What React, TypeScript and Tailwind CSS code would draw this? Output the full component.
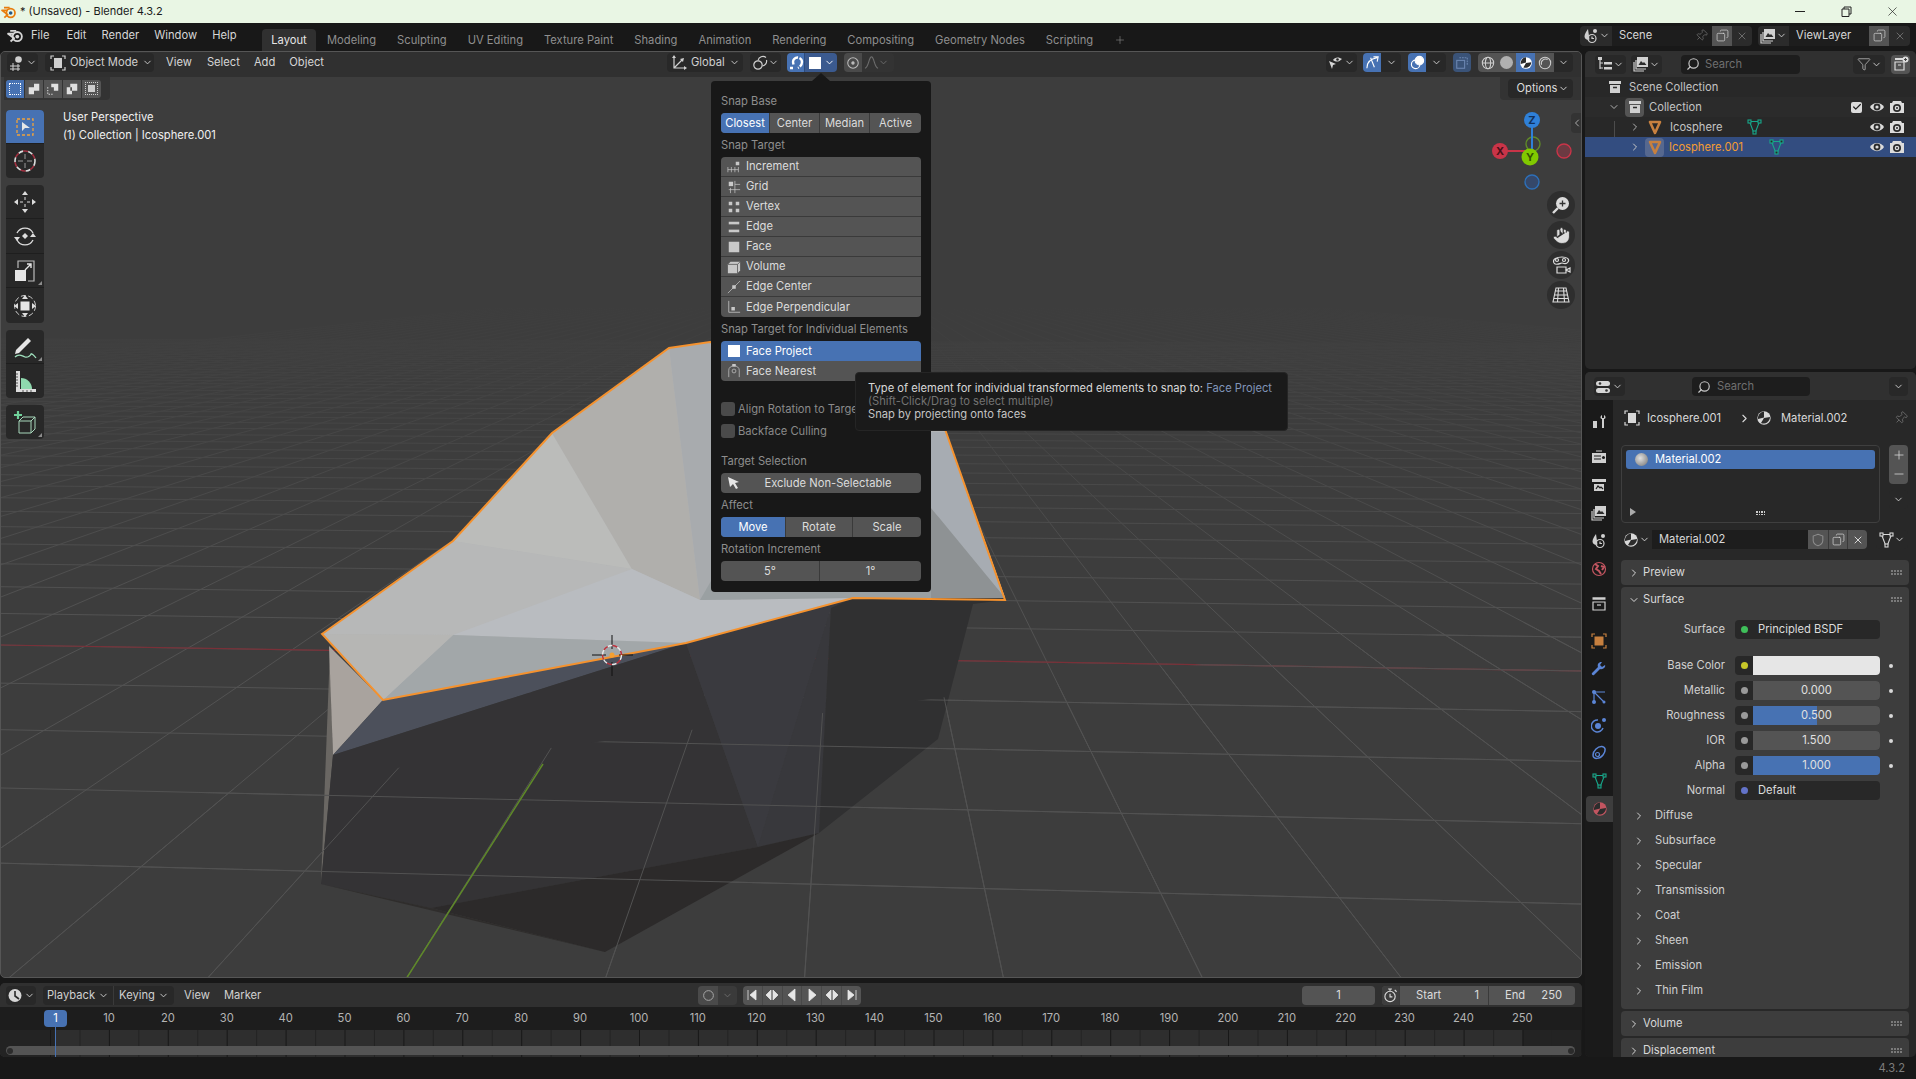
import type { ReactNode } from 'react';
import { ChevronDown, ChevronRight, ChevronLeft, Copy, Funnel, Hand, Pin, Search, X, Check, Plus, Minus } from 'lucide-react';

const I = ({ s = 16, v = 16, children, className = '' }: { s?: number; v?: number; children: ReactNode; className?: string }) => (
  <svg width={s} height={s} viewBox={`0 0 ${v} ${v}`} fill="none" stroke="currentColor" strokeWidth={1.2} className={`shrink-0 ${className}`}>
    {children}
  </svg>
);

const Chev = ({ className = '' }: { className?: string }) => <ChevronDown size={11} strokeWidth={2} className={`shrink-0 ${className}`} />;

// ---- small header icons
const ViewportIc = () => (
  <I><path d="M1 11h10M1 14h10M4 8v8M9 9v7" strokeWidth={1} /><circle cx="9.500" cy="4.500" r="3.300" fill="currentColor" stroke="none" /></I>
);
const ModeIc = () => (
  <I><path d="M1 4V1h3M12 1h3v3M15 12v3h-3M4 15H1v-3" /><rect x="4" y="3" width="8" height="10" fill="currentColor" stroke="none" /></I>
);
const GlobalIc = () => (
  <I><path d="M3 3v10h11M3 13l8-8" /><path d="M3 0l2 3H1zM16 13l-3 2v-4zM13 3l-1 4-3-3z" fill="currentColor" stroke="none" /></I>
);
const PivotIc = () => (
  <I><circle cx="6" cy="10" r="4.200" /><path d="M6 5.500a5 5 0 0 1 8-3M14.500 5a5 5 0 0 1-4 6" /></I>
);
const MagnetIc = () => (
  <I><path d="M5 13h-3M5.500 9.500 5 7a4.500 4.500 0 0 1 9 0c0 3-2 5-4 6" strokeWidth={2.400} strokeDasharray="10 1.500" /></I>
);
const CollectionIc = ({ s = 16 }: { s?: number }) => (
  <I s={s}><path d="M2 2h12v3H2z" fill="currentColor" stroke="none" /><path d="M3 6h10v8H3z" fill="currentColor" stroke="none" /><path d="M6 8.500h4" stroke="#2b2b2b" strokeWidth={1.400} /></I>
);
const TriIc = () => (
  <I><path d="M3 3h10l-5 11z" stroke="#c7803f" strokeWidth={2.600} strokeLinejoin="round" /></I>
);
const MeshIc = ({ color = '#17a88b' }: { color?: string }) => (
  <svg width="15" height="16" viewBox="0 0 15 16" fill="none" stroke={color} strokeWidth={1.100} className="shrink-0">
    <path d="M2.500 2.500h10L8.500 13h-2z" />
    <rect x="1" y="1" width="3" height="3" fill="#282828" />
    <rect x="11" y="1" width="3" height="3" fill="#282828" />
    <rect x="6" y="12" width="3" height="3" fill="#282828" />
  </svg>
);
const SceneIc = () => (
  <I><path d="M5 1C3 4 1.500 6 1.500 8.500a3.500 3.500 0 0 0 5 3" fill="currentColor" stroke="none" /><circle cx="12" cy="3" r="2" fill="currentColor" stroke="none" /><circle cx="9" cy="10.500" r="4" /><path d="M9 8.500v2h2" /></I>
);
const LayerIc = () => (
  <I><rect x="4" y="1" width="11" height="10" fill="currentColor" stroke="none" /><path d="M3 4v9h10M1 6v9h10" /><path d="M5.500 9l2.500-4 2 2 1-1 2.500 3z" fill="#2b2b2b" stroke="none" /></I>
);
const NewCollIc = () => (
  <I><path d="M2 6h9v8H2zM5 9h3" /><path d="M2 3h8" strokeWidth={2} /><circle cx="12.500" cy="3.500" r="3" fill="currentColor" stroke="none" /><path d="M12.500 2v3M11 3.500h3" stroke="#444" strokeWidth={1} /></I>
);
const OutlinerIc = () => (
  <I><path d="M3 3v10M3 7h3M3 12h3" /><path d="M1 1h4v3H1zM7 6h8v2.500H7zM7 11h8v2.500H7z" fill="currentColor" stroke="none" /></I>
);
const MatIc = ({ s = 16 }: { s?: number }) => (
  <I s={s}>
    <circle cx="8" cy="8" r="6.700" fill="currentColor" stroke="none" />
    <path d="M8 1.500v6l-6 1.500A6.500 6.500 0 0 1 8 1.500zM8 8l6-1a6.500 6.500 0 0 1-9 6z" fill="#2c2c2c" stroke="none" />
  </I>
);
const EyeIc = () => (
  <svg width="16" height="16" viewBox="0 0 16 16" className="shrink-0">
    <path d="M1 8c3-5.500 11-5.500 14 0-3 5.500-11 5.500-14 0z" fill="#dcdcdc" />
    <circle cx="8" cy="8" r="3.400" fill="#2b2b2b" />
    <circle cx="8" cy="8" r="1.600" fill="#dcdcdc" />
  </svg>
);
const RenderCamIc = () => (
  <svg width="16" height="16" viewBox="0 0 16 16" className="shrink-0">
    <path d="M4 2h8l1 2h2v10H1V4h2z" fill="#dcdcdc" />
    <circle cx="8" cy="9" r="4" fill="#2b2b2b" />
    <circle cx="8" cy="9" r="2.300" fill="#dcdcdc" />
    <circle cx="8" cy="9" r="1" fill="#2b2b2b" />
  </svg>
);
const GripDots = () => (
  <div className="grid grid-cols-4 gap-x-[1px] gap-y-[1px]">
    {Array.from({ length: 8 }, (_, i) => <span key={i} className="w-[2px] h-[2px] bg-[#7a7a7a]" />)}
  </div>
);

const BlenderLogo = ({ s = 18, body = 'currentColor', dot = 'currentColor' }: { s?: number; body?: string; dot?: string }) => (
  <svg width={s} height={s} viewBox="0 0 24 24" fill="none" stroke={body} strokeWidth={2.600} strokeLinejoin="round" className="shrink-0">
    <circle cx="14.500" cy="13.500" r="6.500" />
    <path d="M13 5.500H4.500M10 9.500H1.500L10 16l-5 4.500" />
    <circle cx="14.500" cy="13.500" r="2.700" fill={dot} stroke="none" />
  </svg>
);

// ---- tool shelf icons
const tools: Record<string, ReactNode> = {
  select: (
    <><rect x="4" y="4" width="16" height="16" stroke="#f0a23c" strokeWidth={1.300} strokeDasharray="3 2" /><path d="M9 7l8 6h-5l-3 3z" fill="#e6e6e6" stroke="none" /></>
  ),
  cursor: (
    <><circle cx="12" cy="12" r="10" stroke="#ddd" strokeWidth={1.600} strokeDasharray="5 5" /><circle cx="12" cy="12" r="10" stroke="#a03040" strokeWidth={1.600} strokeDasharray="5 5" strokeDashoffset={5} /><path d="M12 5v5M12 14v5M5 12h5M14 12h5" stroke="#999" /></>
  ),
  move: (
    <><path d="M12 1l3 4H9zM12 23l-3-4h6zM1 12l4-3v6zM23 12l-4 3V9z" fill="#ddd" stroke="none" /><path d="M12 7v3M12 14v3M7 12h3M14 12h3" stroke="#ddd" /></>
  ),
  rotate: (
    <><path d="M4 9a9 9 0 0 1 16 0M20 16a9 9 0 0 1-16 0" stroke="#ddd" strokeWidth={1.300} /><path d="M12 9l3 3-3 3-3-3z" fill="#ddd" stroke="none" /><path d="M1 13h6l-3 4zM17 13h6l-3-4z" fill="#ddd" stroke="none" /></>
  ),
  scale: (
    <><rect x="2" y="11" width="11" height="11" fill="#e6e6e6" stroke="none" /><path d="M5 9V2h16v20h-6" stroke="#bbb" strokeWidth={1.200} /><path d="M12 11l6-6M14 5h4v4" stroke="#e6e6e6" strokeWidth={1.400} /></>
  ),
  transform: (
    <><circle cx="12" cy="12" r="10.500" stroke="#ccc" strokeDasharray="5 2.500" /><rect x="7.500" y="7.500" width="9" height="9" fill="#e6e6e6" stroke="none" /><path d="M12 1l3 4H9zM12 23l-3-4h6zM1 12l4-3v6zM23 12l-4 3V9z" fill="#ddd" stroke="none" /></>
  ),
  annotate: (
    <><path d="M3 15L15 3l3 3L6 18l-4 1z" fill="#e6e6e6" stroke="none" /><path d="M2 22c4-4 7-1 10 0s6-2 6-3 3 1 5 4" stroke="#9fe0bd" strokeWidth={1.300} /></>
  ),
  measure: (
    <><path d="M3 2h4v18h16v3H3z" fill="#ddd" stroke="none" /><path d="M8 9a11 11 0 0 1 11 11H8z" fill="#8fd9ae" stroke="none" /><path d="M3 5h2M3 8h2M3 11h2M3 14h2M3 17h2M10 21v2M14 21v2M18 21v2" stroke="#333" strokeWidth={0.800} /></>
  ),
  add: (
    <><path d="M5 1v8M1 5h8" stroke="#6fd19a" strokeWidth={2.200} /><path d="M6 11l4-4h12v12l-4 4H6zM6 11h12v12M18 11l4-4" stroke="#a7d7bb" strokeWidth={1} /></>
  ),
};
const Tool = ({ name, active, corner, tall }: { name: string; active?: boolean; corner?: boolean; tall?: boolean }) => (
  <div className={`relative w-[38px] ${tall ? 'h-[35px]' : 'h-[34px]'} flex items-center justify-center ${active ? 'bg-[#4772b3]' : ''}`}>
    <svg width="24" height="24" viewBox="0 0 24 24" fill="none">{tools[name]}</svg>
    {corner && <span className="absolute right-[2px] bottom-[2px] w-[4px] h-[4px] bg-[#8c8c8c] [clip-path:polygon(100%_0,100%_100%,0_100%)]" />}
  </div>
);
const ToolGroup = ({ children }: { children: ReactNode }) => (
  <div className="w-[38px] rounded-[4px] bg-[#282828] overflow-hidden flex flex-col divide-y divide-[#1e1e1e]">{children}</div>
);

const NavBtn = ({ children }: { children: ReactNode }) => (
  <div className="w-[28px] h-[28px] rounded-full bg-[#2e2e2e] flex items-center justify-center text-[#dcdcdc]">{children}</div>
);

// ---- viewport drawing
const VPX = 852;
const HY = 267;
const vertical = Array.from({ length: 75 }, (_, i) => 410 + 197 * (i - 30));
const horizontal = Array.from({ length: 52 }, (_, i) => 1 / (0.00262 - 0.00024 * (i - 47)));

const GridLines = ({ stroke }: { stroke: string }) => (
  <g stroke={stroke} strokeWidth={1}>
    {vertical.map((x970) => (
      <line key={x970} x1={VPX + (x970 - VPX) * (40 / 703)} y1={307} x2={VPX + (x970 - VPX) * (740 / 703)} y2={1007} />
    ))}
    {horizontal.map((d) => (
      <line key={d} x1={-10} y1={HY + (d * 22990) / 23280} x2={1600} y2={HY + (d * 24600) / 23280} />
    ))}
  </g>
);

const faces: [string, string][] = [
  ['321,633 452,540 551,432 668,347 709,341 925,372 945,431 1004,597 852,597 685,642 382,699', '#b2b4b5'],
  ['321,633 452,540 631,568 699,599 452,634', '#b7b8b8'],
  ['452,540 551,432 631,568', '#bbbcba'],
  ['551,432 668,347 699,599 631,568', '#b0afac'],
  ['668,347 709,341 740,600 699,599', '#a8abae'],
  ['452,634 631,568 699,599 852,597 685,642', '#b9bcc0'],
  ['452,634 685,642 382,699', '#a2a7a9'],
  ['321,633 452,634 382,699', '#b6b6b4'],
  ['699,599 710,580 930,580 945,431 1004,597 852,597', '#9aa0a2'],
  ['930,431 945,431 1004,597 930,507', '#a7acb2'],
  ['930,507 1004,597 930,597', '#8e9294'],
  ['329,648 332,754 320,883', '#6a6763'],
  ['328,645 382,699 332,754', '#a9a39e'],
  ['382,699 685,642 332,754', '#4c505b'],
  ['332,754 685,642 757,846 430,907 320,883', '#343335'],
  ['685,642 852,597 830,607 757,846', '#3a3a3f'],
  ['830,607 818,832 757,846', '#38383c'],
  ['830,607 852,597 1004,599 972,603 937,738 818,832', '#303031'],
  ['430,907 757,846 818,832 604,951', '#2c2a2a'],
  ['320,883 430,907 604,951', '#2f2d2c'],
];

const Scene3D = () => (
  <svg className="absolute left-0 top-0" width="1582" height="927" viewBox="0 51 1582 927">
    <defs>
      <linearGradient id="gridfade" gradientUnits="userSpaceOnUse" x1="0" y1="300" x2="0" y2="620">
        <stop offset="0" stopColor="#3d3d3d" />
        <stop offset="1" stopColor="#525252" />
      </linearGradient>
      <clipPath id="below">
        <polygon points="0,818 1582,614 1582,978 0,978" />
      </clipPath>
    </defs>
    <GridLines stroke="url(#gridfade)" />
    <path d="M0 644L1582 670" stroke="#7a3038" strokeWidth={1.200} />
    {faces.map(([points, fill]) => <polygon key={points} points={points} fill={fill} />)}
    <g clipPath="url(#below)">
      <GridLines stroke="#525252" />
      <path d="M542 763L405 978" stroke="#5f8a28" strokeWidth={1.500} />
    </g>
    <polygon
      points="321,633 452,540 551,432 668,347 709,341 925,372 945,431 1004,599 852,597 685,642 382,699"
      fill="none" stroke="#f5922e" strokeWidth={2}
    />
    <g>
      <path d="M611 634v14M611 661v14M591 654h14M618 654h14" stroke="#101010" strokeWidth={1} />
      <circle cx="611" cy="654" r="9.500" fill="none" stroke="#e8e8e8" strokeWidth={1.400} strokeDasharray="5 5" />
      <circle cx="611" cy="654" r="9.500" fill="none" stroke="#c0303c" strokeWidth={1.400} strokeDasharray="5 5" strokeDashoffset={5} />
      <circle cx="611" cy="654" r="2.500" fill="#f5a030" />
    </g>
  </svg>
);

const Gizmo = () => (
  <svg className="absolute left-[1489px] top-[54px]" width="90" height="100" viewBox="1490 106 90 100" fontFamily="Inter, sans-serif" fontSize="11" fontWeight="700" textAnchor="middle">
    <circle cx="1564" cy="151" r="7" fill="#6c3a42" stroke="#c93448" strokeWidth={1.400} />
    <circle cx="1532" cy="182" r="7" fill="#35486a" stroke="#2d6fb8" strokeWidth={1.400} />
    <circle cx="1533" cy="144" r="7" fill="none" stroke="#5f8a28" strokeWidth={1.400} />
    <path d="M1532 126V156" stroke="#2f80d8" strokeWidth={2} />
    <path d="M1506 151H1528" stroke="#c93448" strokeWidth={2} />
    <circle cx="1532" cy="120" r="8" fill="#2f80d8" />
    <text x="1532" y="124" fill="#12305a">Z</text>
    <circle cx="1500" cy="151" r="8" fill="#c93448" />
    <text x="1500" y="155" fill="#4a1018">X</text>
    <circle cx="1530" cy="157" r="8.500" fill="#81c900" />
    <text x="1530" y="161" fill="#355400">Y</text>
  </svg>
);

// ---- widgets
const Dim = ({ className = '', children }: { className?: string; children?: ReactNode }) => (
  <div className={`h-[19px] flex items-center justify-center rounded-[4px] bg-[#282828] text-[#d0d0d0] ${className}`}>{children}</div>
);

const PopLabel = ({ children, className = '' }: { children: ReactNode; className?: string }) => (
  <div className={`h-[20px] flex items-center text-[#8e8e8e] whitespace-nowrap ${className}`}>{children}</div>
);

const Seg = ({ items, active, widths }: { items: string[]; active?: number; widths: string[] }) => (
  <div className="mt-[2px] h-[20px] flex rounded-[4px] overflow-hidden bg-[#545454] divide-x divide-[#3a3a3a]">
    {items.map((t, i) => (
      <div key={t} className={`${widths[i]} flex items-center justify-center text-[#dcdcdc] ${i === active ? 'bg-[#4772b3] text-white' : ''}`}>{t}</div>
    ))}
  </div>
);

const snapIcons: Record<string, ReactNode> = {
  Increment: <><path d="M1 8v6M5 8v6M9 8v6M13 8v6M1 11h12" strokeWidth={0.800} /><rect x="10" y="2" width="4" height="4" fill="currentColor" stroke="none" /></>,
  Grid: <><rect x="2" y="2" width="5" height="5" fill="currentColor" stroke="none" /><path d="M9 1v14M2 11h13M4 9v6M9 5h6" strokeWidth={0.800} /></>,
  Vertex: <><rect x="2" y="2" width="4" height="4" fill="currentColor" stroke="none" /><rect x="10" y="2" width="4" height="4" fill="currentColor" stroke="none" /><rect x="2" y="10" width="4" height="4" fill="currentColor" stroke="none" /><rect x="10" y="10" width="4" height="4" fill="currentColor" stroke="none" /></>,
  Edge: <><rect x="2" y="2" width="12" height="3" fill="currentColor" stroke="none" /><rect x="2" y="11" width="12" height="3" fill="currentColor" stroke="none" /></>,
  Face: <rect x="2" y="2" width="12" height="12" fill="currentColor" stroke="none" />,
  Volume: <><path d="M1 5l3-3h11v10l-3 3H1z" fill="currentColor" stroke="none" /><path d="M1 5h11v10M12 5l3-3" stroke="#545454" strokeWidth={0.900} /></>,
  'Edge Center': <><path d="M1 15L15 1" strokeWidth={0.800} /><rect x="6" y="6" width="4" height="4" fill="currentColor" stroke="none" /></>,
  'Edge Perpendicular': <><path d="M2 1v13h13" strokeWidth={0.900} /><rect x="5" y="8" width="4" height="4" fill="currentColor" stroke="none" /></>,
  'Face Nearest': <><path d="M2 15V7a6 5 0 0 1 12 0v8" strokeWidth={0.800} /><circle cx="8" cy="8" r="2.200" strokeWidth={0.800} /><rect x="6" y="0" width="4" height="3" fill="currentColor" stroke="none" /></>,
};

const SnapRow = ({ label, active }: { label: string; active?: boolean }) => (
  <div className={`h-[20px] flex items-center ${active ? 'bg-[#4772b3] text-white' : 'bg-[#545454] text-[#dcdcdc]'}`}>
    <span className="w-[25px] flex justify-center">
      {active ? <span className="w-[12px] h-[12px] bg-white" /> : <I s={14} className="text-[#c8c8c8]">{snapIcons[label]}</I>}
    </span>
    {label}
  </div>
);

const Check2 = ({ label }: { label: string }) => (
  <div className="h-[20px] flex items-center text-[#8a8a8a] whitespace-nowrap">
    <span className="w-[14px] h-[14px] rounded-[3px] bg-[#4a4a4a] mr-[3px]" />
    {label}
  </div>
);

const SnapPopover = () => (
  <div className="absolute left-[710px] top-[29px] w-[220px] h-[511px] rounded-[4px] bg-[#181818] px-[10px] pt-[10px] flex flex-col">
    <span className="absolute -top-[8px] left-[101px] w-[18px] h-[8px] bg-[#181818] [clip-path:polygon(50%_0,100%_100%,0_100%)]" />
    <PopLabel>Snap Base</PopLabel>
    <Seg items={['Closest', 'Center', 'Median', 'Active']} active={0} widths={['w-[49px]', 'w-[50px]', 'w-[50px]', 'w-[51px]']} />
    <PopLabel className="mt-[2px]">Snap Target</PopLabel>
    <div className="mt-[2px] rounded-[4px] overflow-hidden divide-y divide-[#3a3a3a]">
      {['Increment', 'Grid', 'Vertex', 'Edge', 'Face', 'Volume', 'Edge Center', 'Edge Perpendicular'].map((t) => <SnapRow key={t} label={t} />)}
    </div>
    <PopLabel className="mt-[2px]">Snap Target for Individual Elements</PopLabel>
    <div className="mt-[2px] rounded-[4px] overflow-hidden">
      <SnapRow label="Face Project" active />
      <SnapRow label="Face Nearest" />
    </div>
    <div className="mt-[18px]"><Check2 label="Align Rotation to Target" /></div>
    <div className="mt-[2px]"><Check2 label="Backface Culling" /></div>
    <PopLabel className="mt-[10px]">Target Selection</PopLabel>
    <div className="mt-[2px] h-[20px] rounded-[4px] bg-[#545454] relative flex items-center justify-center pl-[14px] text-[#dcdcdc]">
      <svg className="absolute left-[6px]" width="14" height="14" viewBox="0 0 14 14"><path d="M1 1l11 5-4 1 3 5-2 1-3-5-3 3z" fill="#e6e6e6" /></svg>
      Exclude Non-Selectable
    </div>
    <PopLabel className="mt-[2px]">Affect</PopLabel>
    <Seg items={['Move', 'Rotate', 'Scale']} active={0} widths={['w-[65px]', 'w-[67px]', 'w-[68px]']} />
    <PopLabel className="mt-[2px]">Rotation Increment</PopLabel>
    <Seg items={['5°', '1°']} widths={['w-[99px]', 'w-[101px]']} />
  </div>
);

const SnapTooltip = () => (
  <div className="absolute left-[854px] top-[320px] w-[433px] h-[59px] rounded-[4px] bg-[#1a1a1a] border border-[#252525] pl-[12px] pt-[9px] leading-[13px] whitespace-nowrap">
    <div className="text-[#d8d8d8]">Type of element for individual transformed elements to snap to: <span className="text-[#8094b8]">Face Project</span></div>
    <div className="text-[#737373]">(Shift-Click/Drag to select multiple)</div>
    <div className="text-[#c4c4c4]">Snap by projecting onto faces</div>
  </div>
);

// ---- areas
const TitleBar = () => (
  <div className="h-[23px] flex items-center bg-[#e9f6e4] text-[#1a1a1a] pl-[1px] shrink-0">
    <BlenderLogo s={16} body="#e87d0d" dot="#265787" />
    <span className="ml-[3px] text-[11px]">* (Unsaved) - Blender 4.3.2</span>
    <div className="ml-auto flex items-center">
      <div className="w-[46px] flex justify-center"><span className="w-[10px] h-[1px] bg-[#222]" /></div>
      <div className="w-[46px] flex justify-center">
        <svg width="11" height="11" viewBox="0 0 11 11" fill="none" stroke="#222"><path d="M1 3h7v7.500H1zM3 3V1h7v7H8" /></svg>
      </div>
      <div className="w-[47px] flex justify-center"><X size={15} strokeWidth={1.100} className="text-[#222]" /></div>
    </div>
  </div>
);

const menuItems = [
  ['File', 'ml-[7px]'], ['Edit', 'ml-[17px]'], ['Render', 'ml-[15px]'], ['Window', 'ml-[15px]'], ['Help', 'ml-[15px]'],
];
const workspaces = ['Modeling', 'Sculpting', 'UV Editing', 'Texture Paint', 'Shading', 'Animation', 'Rendering', 'Compositing', 'Geometry Nodes', 'Scripting'];

const TopBar = () => (
  <div className="h-[28px] shrink-0 flex bg-[#181818] text-[#d6d6d6]">
    <div className="w-[262px] flex items-center pl-[7px] pb-[3px]">
      <BlenderLogo s={17} />
      {menuItems.map(([t, m]) => <span key={t} className={m}>{t}</span>)}
    </div>
    <div className="w-[54px] mt-[6px] rounded-t-[4px] bg-[#303030] flex items-center justify-center text-[#e6e6e6]">Layout</div>
    <div className="flex items-center pt-[6px] gap-[21px] ml-[11px] text-[#8f8f8f]">
      {workspaces.map((t) => <span key={t}>{t}</span>)}
      <Plus size={12} strokeWidth={1.200} />
    </div>
    <div className="ml-auto flex items-center pb-[3px] pr-[6px] gap-[6px]">
      <div className="w-[172px] h-[20px] flex items-center rounded-[4px] bg-[#2b2b2b] overflow-hidden">
        <div className="w-[32px] flex items-center justify-center text-[#d0d0d0]"><SceneIc /><Chev /></div>
        <div className="w-[100px] h-full bg-[#1d1d1d] flex items-center pl-[7px] justify-between pr-[4px] text-[#d6d6d6]">Scene<Pin size={13} strokeWidth={1.200} className="rotate-45 text-[#7c7c7c]" /></div>
        <div className="w-[20px] h-full bg-[#545454] flex items-center justify-center"><Copy size={13} strokeWidth={1.300} className="-scale-x-100" /></div>
        <div className="w-[20px] flex justify-center text-[#6a6a6a]"><X size={12} /></div>
      </div>
      <div className="w-[152px] h-[20px] flex items-center rounded-[4px] bg-[#2b2b2b] overflow-hidden">
        <div className="w-[31px] flex items-center justify-center text-[#d0d0d0]"><LayerIc /><Chev /></div>
        <div className="w-[80px] h-full bg-[#1d1d1d] flex items-center pl-[7px] text-[#d6d6d6]">ViewLayer</div>
        <div className="w-[20px] h-full bg-[#545454] flex items-center justify-center"><Copy size={13} strokeWidth={1.300} className="-scale-x-100" /></div>
        <div className="w-[21px] flex justify-center text-[#6a6a6a]"><X size={12} /></div>
      </div>
    </div>
  </div>
);

const ViewportHeader = () => (
  <div className="relative h-[25px] bg-[#303030] flex items-center text-[#d6d6d6] pl-[6px] pb-[4px] whitespace-nowrap">
    <div className="w-[660px] flex items-center">
      <Dim className="w-[31px] gap-[1px]"><ViewportIc /><Chev /></Dim>
      <Dim className="w-[109px] ml-[7px] gap-[4px] justify-start pl-[5px]"><ModeIc />Object Mode<Chev className="ml-auto mr-[3px]" /></Dim>
      <span className="ml-[12px]">View</span>
      <span className="ml-[15px]">Select</span>
      <span className="ml-[14px]">Add</span>
      <span className="ml-[14px]">Object</span>
    </div>
    <Dim className="w-[76px] gap-[4px] justify-start pl-[4px]"><GlobalIc />Global<Chev className="ml-auto mr-[3px]" /></Dim>
    <Dim className="w-[31px] ml-[7px]"><PivotIc /><Chev /></Dim>
    <div className="ml-[6px] h-[19px] flex rounded-[4px] overflow-hidden text-white">
      <div className="w-[18px] bg-[#4772b3] flex items-center justify-center border-r border-[#2b4a7c]"><MagnetIc /></div>
      <div className="w-[32px] bg-[#3b5a8f] flex items-center pl-[4px] gap-[1px]"><span className="w-[12px] h-[12px] bg-white" /><Chev className="ml-[2px]" /></div>
    </div>
    <div className="ml-[7px] h-[19px] w-[50px] flex rounded-[4px] overflow-hidden bg-[#333] text-[#bdbdbd]">
      <div className="w-[18px] bg-[#4a4a4a] flex items-center justify-center"><I s={14}><circle cx="8" cy="8" r="6" /><circle cx="8" cy="8" r="1.300" fill="currentColor" /></I></div>
      <div className="flex items-center text-[#6c6c6c] pl-[2px]"><I s={15}><path d="M1 14C5 14 5 2 8 2s3 12 7 12" /></I><Chev className="-ml-[1px]" /></div>
    </div>

    <Dim className="w-[31px] ml-auto gap-0">
      <svg width="16" height="16" viewBox="0 0 16 16" className="shrink-0"><path d="M1 6l7 3-3 1-1 4z" fill="#d6d6d6" /><path d="M5 5c1.500-3 6-3.500 9-1-3 3-6 3.500-9 1z" fill="#d6d6d6" /><circle cx="9.500" cy="4.500" r="1.300" fill="#282828" /></svg>
      <Chev />
    </Dim>
    <div className="ml-[6px] w-[38px] h-[19px] flex rounded-[4px] overflow-hidden bg-[#282828]">
      <div className="w-[18px] bg-[#4772b3] flex items-center justify-center text-white"><I s={15}><path d="M2 14C2 8 6 4 13 3M9 2l5 0-1 5M6 3l4 10" /></I></div>
      <div className="flex-1 flex justify-center items-center"><Chev /></div>
    </div>
    <div className="ml-[7px] w-[38px] h-[19px] flex rounded-[4px] overflow-hidden bg-[#282828]">
      <div className="w-[18px] bg-[#4772b3] flex items-center justify-center text-white"><I s={15}><circle cx="6" cy="10" r="4.500" /><circle cx="10" cy="6" r="4.500" fill="currentColor" /></I></div>
      <div className="flex-1 flex justify-center items-center"><Chev /></div>
    </div>
    <div className="ml-[7px] w-[18px] h-[19px] rounded-[4px] bg-[#3a5378] flex items-center justify-center text-[#6d88b3]"><I s={14}><path d="M5 2h9v9" strokeDasharray="2 1" /><rect x="2" y="5" width="9" height="9" /></I></div>
    <div className="ml-[7px] w-[95px] h-[19px] flex rounded-[4px] overflow-hidden bg-[#282828] text-[#cfcfcf]">
      <div className="w-[19px] bg-[#545454] flex items-center justify-center"><I s={14}><circle cx="8" cy="8" r="6.500" /><ellipse cx="8" cy="8" rx="3" ry="6.500" /><path d="M1.500 8h13" /></I></div>
      <div className="w-[19px] bg-[#545454] flex items-center justify-center"><span className="w-[13px] h-[13px] rounded-full bg-[#b0b0b0]" /></div>
      <div className="w-[19px] bg-[#4772b3] flex items-center justify-center text-white"><MatIc s={14} /></div>
      <div className="w-[19px] bg-[#545454] flex items-center justify-center"><I s={14}><circle cx="8" cy="8" r="6.500" /><path d="M4 10a5 5 0 0 1 7-6" /></I></div>
      <div className="flex-1 flex justify-center items-center"><Chev /></div>
    </div>
    <span className="w-[8px]" />
  </div>
);

const Viewport = () => (
  <div className="relative h-[927px] rounded-[5px] overflow-hidden border border-[#565656] bg-[#3d3d3d]">
    <Scene3D />
    <ViewportHeader />
    <div className="relative flex items-start h-[24px]">
      <div className="ml-[3px] w-[106px] h-[23px] rounded-br-[4px] bg-[#333333] flex items-center pl-[2px]">
        <div className="flex rounded-[3px] overflow-hidden h-[18px] divide-x divide-[#333] bg-[#545454] text-[#e0e0e0]">
          <div className="w-[19px] bg-[#4772b3] flex items-center justify-center"><span className="w-[12px] h-[12px] border border-dotted border-white" /></div>
          <div className="w-[19px] flex items-center justify-center"><I s={14}><path d="M2 6h6V2h6v8H8v4H2z" fill="currentColor" stroke="none" /></I></div>
          <div className="w-[19px] flex items-center justify-center"><I s={14}><path d="M6 2h8v8H9V6H6z" fill="currentColor" stroke="none" /><path d="M2 6v8h6" strokeDasharray="1.500 1.500" /></I></div>
          <div className="w-[19px] flex items-center justify-center"><I s={14}><path d="M6 2h8v8H8v4H2V6h4zM6 6v4h2V6z" fill="currentColor" stroke="none" /></I></div>
          <div className="w-[19px] flex items-center justify-center"><span className="w-[13px] h-[13px] border border-dotted border-[#ccc] flex items-center justify-center"><span className="w-[7px] h-[7px] bg-[#ccc]" /></span></div>
        </div>
      </div>
      <div className="ml-auto w-[81px] h-[23px] rounded-bl-[4px] bg-[#333333] flex items-center justify-center">
        <Dim className="w-[65px] text-[#dcdcdc] justify-between pl-[7px] pr-[3px]">Options<Chev /></Dim>
      </div>
    </div>

    <div className="absolute left-[5px] top-[58px] flex flex-col gap-[7px]">
      <ToolGroup><Tool name="select" active /><Tool name="cursor" /></ToolGroup>
      <ToolGroup><Tool name="move" /><Tool name="rotate" tall /><Tool name="scale" corner /><Tool name="transform" tall /></ToolGroup>
      <ToolGroup><Tool name="annotate" corner /><Tool name="measure" /></ToolGroup>
      <ToolGroup><Tool name="add" corner /></ToolGroup>
    </div>

    <div className="absolute left-[62px] top-[56px] text-[#f0f0f0] leading-[18px]">
      <div>User Perspective</div>
      <div>(1) Collection | Icosphere.001</div>
    </div>

    <Gizmo />
    <div className="absolute left-[1570px] top-[61px] w-[12px] h-[20px] rounded-l-[4px] bg-[#333] flex items-center justify-center text-[#aaa]"><ChevronLeft size={12} /></div>
    <div className="absolute left-[1546px] top-[139px] flex flex-col gap-[2px]">
      <NavBtn>
        <svg width="20" height="20" viewBox="0 0 20 20"><circle cx="11.500" cy="8.500" r="6.500" fill="#dcdcdc" /><path d="M7 13l-5 5" stroke="#dcdcdc" strokeWidth={2.400} /><path d="M11.500 5.500v6M8.500 8.500h6" stroke="#333" strokeWidth={1.300} /></svg>
      </NavBtn>
      <NavBtn><Hand size={19} fill="#dcdcdc" strokeWidth={1} stroke="#2e2e2e" /></NavBtn>
      <NavBtn>
        <svg width="20" height="20" viewBox="0 0 20 20" fill="none" stroke="#dcdcdc" strokeWidth={1.200}><path d="M3 8c-2-4 3-6 8-6s8 2 6 5-5 1-6 1-6 3-8 0zM6 12h9v6H6zM15 15l4-2v4z" /><circle cx="6" cy="5" r="1.500" /><circle cx="13" cy="5" r="1.500" /></svg>
      </NavBtn>
      <NavBtn>
        <svg width="20" height="20" viewBox="0 0 20 20" fill="none" stroke="#dcdcdc" strokeWidth={1.100}><path d="M5 3h10l3 14H2zM3.500 10h13M7.500 3l-1 14M12.500 3l1 14M4.500 6h11M3 13.500h14" /></svg>
      </NavBtn>
    </div>

    <SnapPopover />
    <SnapTooltip />
  </div>
);

const frames = Array.from({ length: 25 }, (_, i) => (i + 1) * 10);
const fx = (f: number) => 50 + 5.89 * f;

const Transport = () => (
  <div className="ml-[6px] w-[118px] h-[19px] rounded-[4px] overflow-hidden bg-[#545454] flex divide-x divide-[#484848] text-[#e6e6e6]">
    {[
      'M3 2v10M11 2v10L5 7z',
      'M6 2v10L1 7zM8 2v10l5-5z',
      'M10 1v12L3 7z',
      'M4 1v12l7-6z',
      'M6 2v10L1 7zM8 2v10l5-5z',
      'M11 2v10M3 2v10l6-5z',
    ].map((d, i) => (
      <div key={i} className="flex-1 flex items-center justify-center">
        <svg width="14" height="14" viewBox="0 0 14 14"><path d={d} fill="currentColor" stroke="currentColor" strokeWidth={0.800} /></svg>
      </div>
    ))}
  </div>
);

const Timeline = () => (
  <div className="relative h-[74px] mt-[5px] rounded-[5px] overflow-hidden bg-[#2e2e2e]">
    <div className="h-[24px] bg-[#303030] flex items-center pl-[6px] text-[#d0d0d0] whitespace-nowrap">
      <div className="w-[692px] flex items-center">
        <Dim className="w-[30px] gap-[1px]">
          <svg width="15" height="15" viewBox="0 0 15 15"><circle cx="7" cy="7.500" r="6.500" fill="#d6d6d6" /><path d="M7 3v5l4 3" stroke="#282828" strokeWidth={1.600} fill="none" /></svg>
          <Chev />
        </Dim>
        <div className="ml-[7px] h-[19px] w-[131px] flex rounded-[4px] bg-[#282828] divide-x divide-[#3a3a3a]">
          <div className="w-[71px] flex items-center justify-center gap-[3px]">Playback<Chev /></div>
          <div className="w-[60px] flex items-center justify-center gap-[3px]">Keying<Chev /></div>
        </div>
        <span className="ml-[10px]">View</span>
        <span className="ml-[14px]">Marker</span>
      </div>
      <div className="w-[39px] h-[19px] flex rounded-[4px] overflow-hidden bg-[#3a3a3a]">
        <div className="w-[20px] bg-[#4a4a4a] flex items-center justify-center"><I s={13} className="text-[#a8a8a8]"><circle cx="8" cy="8" r="6" /></I></div>
        <div className="flex-1 flex items-center justify-center text-[#6c6c6c]"><Chev /></div>
      </div>
      <Transport />
      <div className="ml-[441px] w-[73px] h-[19px] rounded-[4px] bg-[#545454] flex items-center justify-center text-[#dcdcdc]">1</div>
      <div className="ml-[7px] h-[19px] flex rounded-[4px] overflow-hidden bg-[#545454] divide-x divide-[#3a3a3a] text-[#dcdcdc]">
        <div className="w-[18px] bg-[#3d3d3d] flex items-center justify-center"><I s={15}><circle cx="7.500" cy="9" r="5.500" /><path d="M7.500 6v3.500h2.500M5.500 1h4M7.500 1v2M12.500 2l2 2" /></I></div>
        <div className="w-[89px] flex items-center justify-between pl-[16px] pr-[9px]"><span>Start</span><span>1</span></div>
        <div className="w-[86px] flex items-center justify-between pl-[16px] pr-[13px]"><span>End</span><span>250</span></div>
      </div>
    </div>
    <div className="h-[23px] bg-[#1d1d1d] flex text-[#b4b4b4] pl-[79.500px] items-center">
      {frames.map((f) => <span key={f} className="w-[58.900px] shrink-0 text-center">{f}</span>)}
    </div>
    <svg className="absolute left-0 top-[47px]" width="1582" height="27">
      <rect x="0" y="0" width="1582" height="27" fill="#2e2e2e" />
      <rect x="0" y="0" width={fx(1)} height="27" fill="#232323" />
      <rect x={fx(250)} y="0" width={1582 - fx(250)} height="27" fill="#232323" />
      {Array.from({ length: 54 }, (_, i) => (i * 5)).map((f) => (
        <line key={f} x1={fx(f) + 0.5} y1="0" x2={fx(f) + 0.5} y2="27" stroke={f % 10 === 0 ? '#181818' : '#242424'} />
      ))}
    </svg>
    <div className="absolute left-[6px] top-[63px] w-[1569px] h-[9px] rounded-full bg-[#545454] flex justify-between items-center px-[1px]">
      <span className="w-[6px] h-[6px] rounded-full bg-[#2b2b2b]" />
      <span className="w-[6px] h-[6px] rounded-full bg-[#2b2b2b]" />
    </div>
    <span className="absolute left-[55px] top-[27px] w-[1px] h-[47px] bg-[#4772b3]" />
    <div className="absolute left-[44px] top-[27px] w-[23px] h-[17px] rounded-[4px] bg-[#4772b3] flex items-center justify-center text-white">1</div>
  </div>
);

const OutRow = ({ bg, children }: { bg: string; children: ReactNode }) => (
  <div className={`relative h-[20px] flex items-center ${bg}`}>{children}</div>
);

const Vis = ({ check }: { check?: boolean }) => (
  <div className="absolute right-[11px] flex items-center gap-[4px]">
    {check && <span className="w-[11px] h-[11px] rounded-[2px] bg-[#dcdcdc] mr-[3px] flex items-center justify-center text-[#222]"><Check size={10} strokeWidth={3} /></span>}
    <EyeIc />
    <RenderCamIc />
  </div>
);

const Outliner = () => (
  <div className="h-[318px] rounded-[5px] overflow-hidden bg-[#282828]">
    <div className="h-[26px] bg-[#303030] flex items-center pl-[10px] text-[#d0d0d0]">
      <Dim className="w-[31px] gap-0"><OutlinerIc /><Chev /></Dim>
      <Dim className="w-[31px] ml-[5px] gap-0"><LayerIc /><Chev /></Dim>
      <div className="ml-[19px] w-[119px] h-[19px] rounded-[4px] bg-[#1d1d1d] flex items-center pl-[5px] gap-[5px] text-[#6f6f6f]">
        <Search size={14} className="-scale-x-100 text-[#c8c8c8]" />Search
      </div>
      <Dim className="w-[32px] ml-[53px] gap-0"><Funnel size={14} strokeWidth={1.200} /><Chev /></Dim>
      <div className="ml-[6px] w-[19px] h-[19px] rounded-[4px] bg-[#545454] flex items-center justify-center text-[#dcdcdc]"><NewCollIc /></div>
    </div>
    <OutRow bg="bg-[#282828]">
      <span className="ml-[22px] text-[#d0d0d0]"><CollectionIc /></span>
      <span className="ml-[6px] text-[#c4c4c4]">Scene Collection</span>
    </OutRow>
    <OutRow bg="bg-[#2b2b2b]">
      <ChevronDown size={12} className="ml-[23px] text-[#b0b0b0]" />
      <span className="ml-[5px] w-[19px] h-[19px] rounded-[4px] bg-[#545454] flex items-center justify-center text-[#d0d0d0]"><CollectionIc /></span>
      <span className="ml-[5px] text-[#c4c4c4]">Collection</span>
      <Vis check />
    </OutRow>
    <OutRow bg="bg-[#282828]">
      <span className="absolute left-[29px] top-[4px] w-[1px] h-[36px] bg-[#4c4c4c]" />
      <ChevronRight size={12} className="ml-[44px] text-[#b0b0b0]" />
      <span className="ml-[6px]"><TriIc /></span>
      <span className="ml-[7px] text-[#c4c4c4]">Icosphere</span>
      <span className="ml-[24px]"><MeshIc /></span>
      <Vis />
    </OutRow>
    <OutRow bg="bg-[#334d80]">
      <ChevronRight size={12} className="ml-[44px] text-[#c8c8c8]" />
      <span className="ml-[4px] w-[19px] h-[19px] rounded-[4px] bg-[#56688f] flex items-center justify-center"><TriIc /></span>
      <span className="ml-[5px] text-[#f39c32]">Icosphere.001</span>
      <span className="ml-[26px]"><MeshIc /></span>
      <Vis />
    </OutRow>
  </div>
);

const navTabs: { node: ReactNode; cn: string }[] = [
  { cn: 'text-[#cfcfcf]', node: <I><path d="M4 1v6M2 7h4v7H2zM11 1c-2 1-2 4 0 4v9h2V5c2 0 2-3 0-4v3h-2z" fill="currentColor" stroke="none" /></I> },
  { cn: 'text-[#cfcfcf] mt-[7px]', node: <I><path d="M1 4h14v10H1z" fill="currentColor" stroke="none" /><path d="M3 7h7M3 10h7" stroke="#1a1a1a" /><circle cx="12.500" cy="8.500" r="1.500" fill="#1a1a1a" stroke="none" /><path d="M5 2h6" /></I> },
  { cn: 'text-[#cfcfcf]', node: <I><path d="M1 2h14v3H1zM3 7h10v7H3z" fill="currentColor" stroke="none" /><path d="M5 12l2-3 2 2 1-1 2 2" stroke="#1a1a1a" /></I> },
  { cn: 'text-[#cfcfcf]', node: <LayerIc /> },
  { cn: 'text-[#cfcfcf]', node: <SceneIc /> },
  { cn: 'text-[#c25560]', node: <I><circle cx="8" cy="8" r="6.500" /><path d="M4 3l3 2-2 3 3 2 2 3M10 5l3 1-2 3" strokeWidth={2} /></I> },
  { cn: 'text-[#cfcfcf] mt-[7px]', node: <I><path d="M2 6h12v8H2z" /><path d="M6 9h4" /><path d="M1.500 2.500h13" strokeWidth={2.500} /></I> },
  { cn: 'text-[#c7803f] mt-[9px]', node: <I><path d="M1 4V1h3M12 1h3v3M15 12v3h-3M4 15H1v-3" /><rect x="3.500" y="3.500" width="9" height="9" fill="currentColor" stroke="none" /></I> },
  { cn: 'text-[#5b85d6]', node: <I><path d="M14 4l-3 2-2-2 2-3c-3-.5-5 2-4 5l-6 6c-1 1 1 3 2 2l6-6c3 1 6-2 5-4z" fill="currentColor" stroke="none" /></I> },
  { cn: 'text-[#5b85d6]', node: <I><circle cx="3" cy="3" r="2" fill="currentColor" stroke="none" /><circle cx="3" cy="13" r="2" fill="currentColor" stroke="none" /><circle cx="13" cy="13" r="1.500" fill="currentColor" stroke="none" /><path d="M3 3l10 10M3 3v10M3 3h11" /></I> },
  { cn: 'text-[#5b85d6]', node: <I><circle cx="7" cy="9" r="3" fill="currentColor" stroke="none" /><path d="M12 11a6 6 0 1 1-5-8" strokeWidth={1.500} /><circle cx="13" cy="3" r="2" fill="currentColor" stroke="none" /></I> },
  { cn: 'text-[#5b85d6]', node: <I><circle cx="6.500" cy="9.500" r="2" /><path d="M2 10c0-4 5-9 9-8.500S15 6 12 10s-10 5-10 0z" strokeWidth={1.500} /></I> },
  { cn: 'text-[#17a88b]', node: <MeshIc /> },
];

const PanelHead = ({ title, open }: { title: string; open?: boolean }) => (
  <div className="h-[25px] flex items-center pr-[7px] text-[#d8d8d8]">
    {open ? <ChevronDown size={12} className="ml-[7px]" /> : <ChevronRight size={12} className="ml-[7px]" />}
    <span className="ml-[3px]">{title}</span>
    <span className="ml-auto"><GripDots /></span>
  </div>
);

const Socket = ({ color }: { color: string }) => (
  <span className="w-[18px] flex justify-center shrink-0"><span className="w-[7px] h-[7px] rounded-full" style={{ background: color }} /></span>
);

const SliderRow = ({ label, value, fill }: { label: string; value: string; fill?: number }) => (
  <div className="h-[25px] flex items-center">
    <span className="w-[104px] text-right text-[#d0d0d0]">{label}</span>
    <div className="relative ml-[10px] w-[145px] h-[19px] rounded-[4px] overflow-hidden bg-[#282828] flex items-center">
      <Socket color="#9a9a9a" />
      <div className="relative flex-1 h-full bg-[#545454] flex items-center justify-center text-[#e0e0e0]">
        {fill !== undefined && <span className="absolute left-0 top-0 h-full bg-[#4772b3]" style={{ width: `${fill}%` }} />}
        <span className="relative">{value}</span>
      </div>
    </div>
    <span className="ml-[9px] w-[4px] h-[4px] rounded-full bg-[#d8d8d8]" />
  </div>
);

const Properties = () => (
  <div className="mt-[3px] h-[685px] rounded-[5px] overflow-hidden bg-[#282828] flex flex-col">
    <div className="h-[28px] shrink-0 bg-[#303030] flex items-center pl-[9px] pt-[1px] text-[#d0d0d0]">
      <Dim className="w-[31px] gap-0">
        <svg width="16" height="14" viewBox="0 0 16 14" fill="#d6d6d6"><rect x="0" y="1" width="14" height="5" rx="2.500" /><rect x="0" y="8" width="14" height="5" rx="2.500" /><circle cx="4" cy="3.500" r="1.300" fill="#333" /><circle cx="10.500" cy="10.500" r="1.300" fill="#333" /></svg>
        <Chev />
      </Dim>
      <div className="ml-[67px] w-[118px] h-[19px] rounded-[4px] bg-[#1d1d1d] flex items-center pl-[5px] gap-[6px] text-[#6f6f6f]">
        <Search size={14} className="-scale-x-100 text-[#c8c8c8]" />Search
      </div>
      <Dim className="ml-[79px] w-[19px]"><Chev /></Dim>
    </div>
    <div className="flex flex-1 min-h-0">
      <div className="w-[28px] shrink-0 bg-[#1a1a1a] flex flex-col items-center pt-[8px]">
        {navTabs.map((t, i) => (
          <div key={i} className={`h-[28px] flex items-center justify-center ${t.cn}`}>{t.node}</div>
        ))}
        <div className="w-[27px] h-[26px] ml-[1px] mt-[1px] rounded-l-[4px] bg-[#3d3d3d] flex items-center justify-center text-[#c25560]"><MatIc /></div>
      </div>
      <div className="flex-1 pl-[8px] pr-[7px] min-w-0">
        <div className="h-[36px] flex items-center text-[#d8d8d8] pl-[3px]">
          <span className="text-[#d8d8d8]"><ModeIc /></span>
          <span className="ml-[7px] w-[85px]">Icosphere.001</span>
          <ChevronRight size={13} className="ml-[6px]" />
          <span className="ml-[5px]"><MatIc /></span>
          <span className="ml-[9px]">Material.002</span>
          <Pin size={14} strokeWidth={1.200} className="ml-auto mr-[1px] rotate-45 text-[#7c7c7c]" />
        </div>
        <div className="mt-[9px] flex">
          <div className="relative w-[259px] h-[78px] rounded-[4px] bg-[#282828] border border-[#3f3f3f] p-[4px]">
            <div className="h-[19px] rounded-[3px] bg-[#4772b3] flex items-center pl-[9px] gap-[7px] text-white">
              <span className="w-[13px] h-[13px] rounded-full bg-[radial-gradient(circle_at_40%_40%,#e0e0e0,#707070)]" />
              Material.002
            </div>
            <span className="absolute left-[8px] bottom-[6px] w-0 h-0 border-y-[4px] border-y-transparent border-l-[6px] border-l-[#aaa]" />
            <span className="absolute left-[134px] bottom-[7px]"><div className="grid grid-cols-4 gap-x-[1px] gap-y-[1px]">{Array.from({ length: 8 }, (_, i) => <span key={i} className="w-[1.500px] h-[1.500px] bg-[#ccc]" />)}</div></span>
          </div>
          <div className="ml-[9px] flex flex-col text-[#dcdcdc]">
            <div className="w-[19px] h-[39px] rounded-[4px] bg-[#545454] flex flex-col items-center justify-around"><Plus size={14} strokeWidth={1.300} /><Minus size={14} strokeWidth={1.300} /></div>
            <Dim className="w-[19px] mt-[6px]"><Chev /></Dim>
          </div>
        </div>
        <div className="mt-[7px] flex">
          <div className="w-[246px] h-[19px] flex rounded-[4px] overflow-hidden bg-[#282828] text-[#d8d8d8]">
            <div className="w-[31px] flex items-center justify-center"><MatIc /><Chev /></div>
            <div className="flex-1 bg-[#1d1d1d] flex items-center pl-[7px]">Material.002</div>
            <div className="w-[20px] bg-[#545454] flex items-center justify-center text-[#8c8c8c]"><I s={14}><path d="M8 1.500l5.500 2v5C13.500 11 11 13.500 8 14.500 5 13.500 2.500 11 2.500 8.500v-5z" /></I></div>
            <div className="w-[20px] bg-[#545454] flex items-center justify-center border-x border-[#3a3a3a]"><Copy size={13} strokeWidth={1.300} className="-scale-x-100" /></div>
            <div className="w-[19px] bg-[#545454] flex items-center justify-center"><X size={12} /></div>
          </div>
          <Dim className="ml-[9px] w-[32px] gap-0 text-[#d8d8d8]"><MeshIc color="#d8d8d8" /><Chev /></Dim>
        </div>
        <div className="mt-[11px] h-[25px] rounded-[4px] bg-[#3d3d3d]"><PanelHead title="Preview" /></div>
        <div className="mt-[2px] h-[422px] rounded-[4px] bg-[#3d3d3d]">
          <PanelHead title="Surface" open />
          <div className="mt-[5px] h-[25px] flex items-center">
            <span className="w-[104px] text-right text-[#d0d0d0]">Surface</span>
            <div className="ml-[10px] w-[145px] h-[19px] rounded-[4px] bg-[#282828] flex items-center text-[#dcdcdc]"><Socket color="#3fbf5a" /><span className="ml-[5px]">Principled BSDF</span></div>
          </div>
          <div className="mt-[11px] h-[25px] flex items-center">
            <span className="w-[104px] text-right text-[#d0d0d0]">Base Color</span>
            <div className="ml-[10px] w-[145px] h-[19px] rounded-[4px] overflow-hidden bg-[#282828] flex items-center"><Socket color="#c7c729" /><span className="flex-1 h-full bg-[#e6e6e6]" /></div>
            <span className="ml-[9px] w-[4px] h-[4px] rounded-full bg-[#d8d8d8]" />
          </div>
          <SliderRow label="Metallic" value="0.000" />
          <SliderRow label="Roughness" value="0.500" fill={50} />
          <SliderRow label="IOR" value="1.500" />
          <SliderRow label="Alpha" value="1.000" fill={100} />
          <div className="h-[25px] flex items-center">
            <span className="w-[104px] text-right text-[#d0d0d0]">Normal</span>
            <div className="ml-[10px] w-[145px] h-[19px] rounded-[4px] bg-[#282828] flex items-center text-[#dcdcdc]"><Socket color="#6373c9" /><span className="ml-[5px]">Default</span></div>
          </div>
          {['Diffuse', 'Subsurface', 'Specular', 'Transmission', 'Coat', 'Sheen', 'Emission', 'Thin Film'].map((t) => (
            <div key={t} className="h-[25px] flex items-center text-[#d0d0d0]">
              <ChevronRight size={12} className="ml-[12px]" />
              <span className="ml-[10px]">{t}</span>
            </div>
          ))}
        </div>
        <div className="mt-[2px] h-[25px] rounded-[4px] bg-[#3d3d3d]"><PanelHead title="Volume" /></div>
        <div className="mt-[2px] h-[25px] rounded-[4px] bg-[#3d3d3d]"><PanelHead title="Displacement" /></div>
      </div>
    </div>
  </div>
);

const StatusBar = () => (
  <div className="h-[22px] shrink-0 flex items-center justify-end pr-[11px] bg-[#181818] text-[#7d7d7d]">4.3.2</div>
);

export default function App() {
  return (
    <div className="w-[1916px] h-[1079px] overflow-hidden flex flex-col bg-[#181818] text-[11.200px] font-['Inter',sans-serif]">
      <TitleBar />
      <TopBar />
      <div className="flex-1 min-h-0 flex">
        <div className="w-[1582px] shrink-0">
          <Viewport />
          <Timeline />
        </div>
        <div className="ml-[3px] flex-1 min-w-0">
          <Outliner />
          <Properties />
        </div>
      </div>
      <StatusBar />
    </div>
  );
}
